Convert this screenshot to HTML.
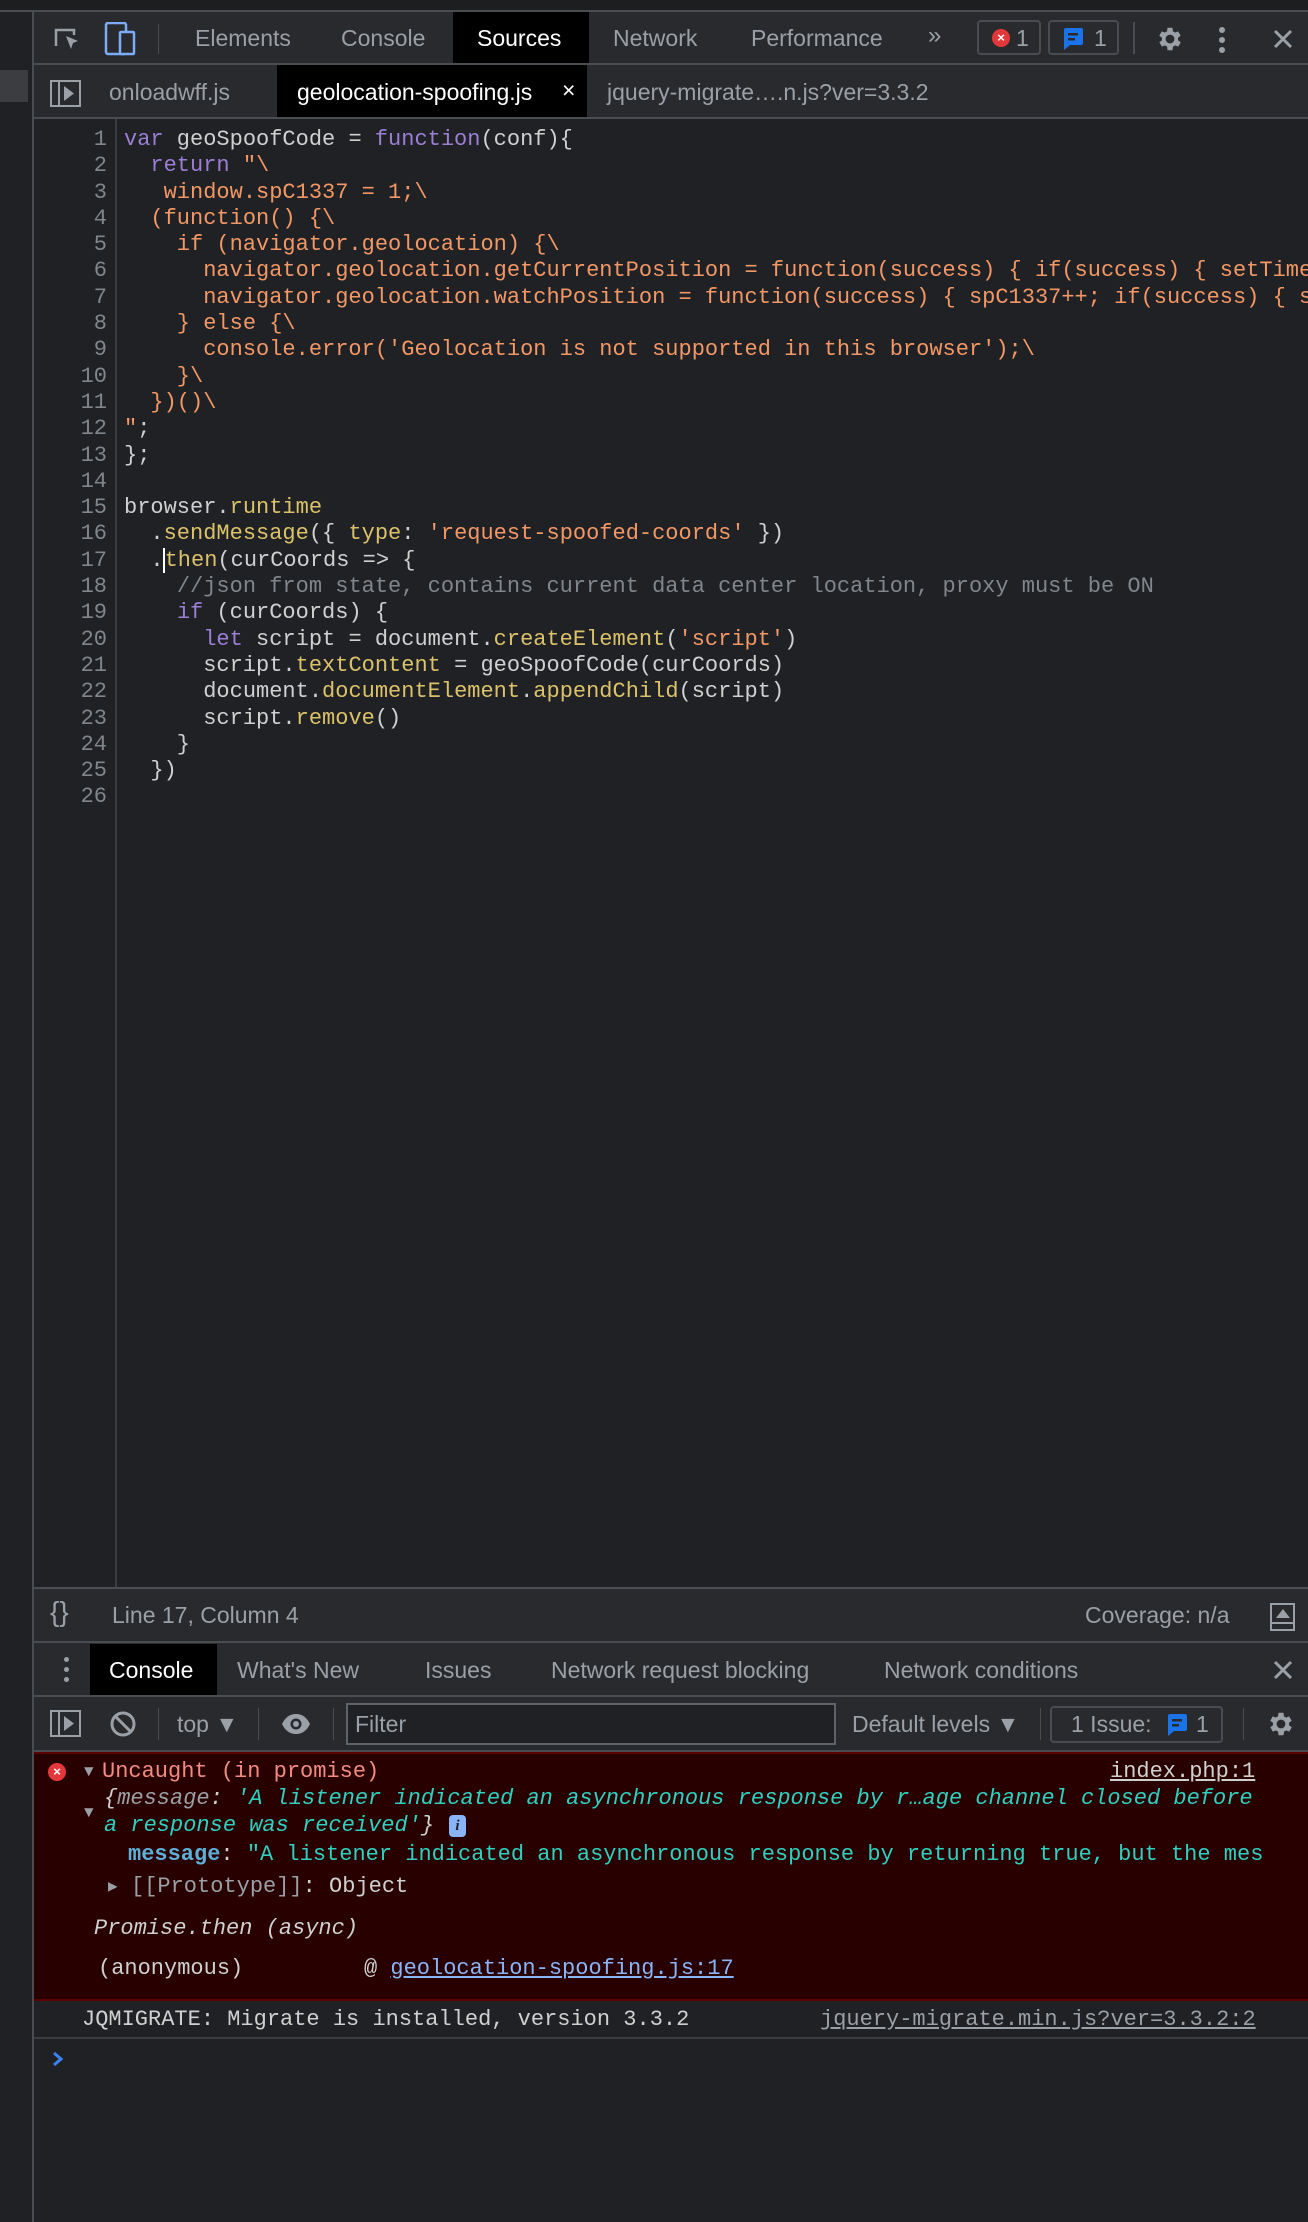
<!DOCTYPE html>
<html><head><meta charset="utf-8"><style>
*{margin:0;padding:0;box-sizing:border-box}
body{width:1308px;height:2222px;background:#202124;position:relative;overflow:hidden;font-family:"Liberation Sans",sans-serif;color:#9aa0a6}
.a{position:absolute;white-space:pre}
.ui{font-size:23px;line-height:26px}
.m{font-family:"Liberation Mono",monospace;font-size:22px;line-height:26px}
.bar{position:absolute;left:34px;right:0;background:#292a2d;border-bottom:2px solid #494c50}
.k{color:#9a7fd5}.s{color:#f29766}.p{color:#cfd0d0}.y{color:#dbc26a}.c{color:#80868b}
</style></head><body>
<div class="a" style="left:0;top:0;width:1308px;height:10px;background:#1d1e20"></div>
<div class="a" style="left:0;top:10px;width:1308px;height:2px;background:#494c50"></div>
<div class="a" style="left:0;top:12px;width:32px;height:2210px;background:#202124"></div>
<div class="a" style="left:0;top:70px;width:28px;height:32px;background:#3c3d40"></div>
<div class="a" style="left:32px;top:12px;width:2px;height:2210px;background:#494c50"></div>

<div class="bar" style="top:12px;height:53px"></div>
<svg class="a" style="left:52px;top:24px" width="32" height="32" viewBox="0 0 32 32"><path d="M4 22V6h18v5" fill="none" stroke="#9aa0a6" stroke-width="2.5"/><path d="M14 12l12 5-5 2-2 6z" fill="#9aa0a6"/></svg>
<svg class="a" style="left:104px;top:22px" width="32" height="34" viewBox="0 0 32 34"><rect x="2" y="1" width="20" height="31" rx="2" fill="none" stroke="#7cacf8" stroke-width="2.5"/><rect x="16" y="10" width="14" height="22" rx="1" fill="#292a2d" stroke="#7cacf8" stroke-width="2.5"/></svg>
<div class="a" style="left:158px;top:24px;width:1px;height:30px;background:#494c50"></div>
<div class="a ui" style="left:195px;top:25px">Elements</div>
<div class="a ui" style="left:341px;top:25px">Console</div>
<div class="a" style="left:453px;top:12px;width:136px;height:51px;background:#000"></div>
<div class="a ui" style="left:477px;top:25px;color:#fff">Sources</div>
<div class="a ui" style="left:613px;top:25px">Network</div>
<div class="a ui" style="left:751px;top:25px">Performance</div>
<div class="a ui" style="left:928px;top:23px;font-size:24px">»</div>
<div class="a" style="left:977px;top:20px;width:64px;height:35px;border:2px solid #494c50;border-radius:4px"></div>
<div class="a" style="left:992px;top:29px;width:18px;height:18px;border-radius:9px;background:#e3383b;color:#fff;font-size:13px;line-height:18px;text-align:center;font-weight:bold">×</div>
<div class="a ui" style="left:1016px;top:25px">1</div>
<div class="a" style="left:1048px;top:20px;width:71px;height:35px;border:2px solid #494c50;border-radius:4px"></div>
<svg class="a" style="left:1062px;top:27px" width="22" height="24" viewBox="0 0 22 24"><path d="M3 1h16a2 2 0 0 1 2 2v13a2 2 0 0 1-2 2H8l-6 5V3a2 2 0 0 1 2-2z" fill="#1a73e8"/><rect x="6" y="6" width="10" height="2.5" fill="#292a2d"/><rect x="6" y="11" width="7" height="2.5" fill="#292a2d"/></svg>
<div class="a ui" style="left:1094px;top:25px">1</div>
<div class="a" style="left:1133px;top:22px;width:2px;height:32px;background:#494c50"></div>
<svg class="a" style="left:1155px;top:24px" width="30" height="30" viewBox="0 0 24 24"><path fill="#9aa0a6" d="M19.4 13a7.5 7.5 0 0 0 0-2l2.1-1.6-2-3.5-2.5 1a7 7 0 0 0-1.7-1L15 3h-4l-.4 2.9a7 7 0 0 0-1.7 1l-2.5-1-2 3.5L6.6 11a7.5 7.5 0 0 0 0 2l-2.1 1.6 2 3.5 2.5-1a7 7 0 0 0 1.7 1L11 21h4l.4-2.9a7 7 0 0 0 1.7-1l2.5 1 2-3.5zM13 15.5A3.5 3.5 0 1 1 13 8.5a3.5 3.5 0 0 1 0 7z" transform="translate(-1 0)"/></svg>
<div class="a" style="left:1219px;top:27px;width:6px;height:6px;border-radius:3px;background:#9aa0a6;box-shadow:0 10px 0 #9aa0a6,0 20px 0 #9aa0a6"></div>
<svg class="a" style="left:1272px;top:28px" width="22" height="22" viewBox="0 0 22 22"><path d="M3 3l16 16M19 3L3 19" stroke="#9aa0a6" stroke-width="3"/></svg>

<div class="bar" style="top:65px;height:54px"></div>
<svg class="a" style="left:50px;top:80px" width="31" height="27" viewBox="0 0 31 27"><rect x="1" y="1" width="29" height="25" fill="none" stroke="#9aa0a6" stroke-width="2"/><path d="M9 1v25" stroke="#9aa0a6" stroke-width="2"/><path d="M14 6l10 7.5-10 7.5z" fill="#9aa0a6"/></svg>
<div class="a ui" style="left:109px;top:79px">onloadwff.js</div>
<div class="a" style="left:277px;top:65px;width:310px;height:52px;background:#000"></div>
<div class="a ui" style="left:297px;top:79px;color:#fff">geolocation-spoofing.js</div>
<div class="a ui" style="left:562px;top:77px;color:#fff">×</div>
<div class="a ui" style="left:607px;top:79px">jquery-migrate….n.js?ver=3.3.2</div>

<div class="a" style="left:34px;top:119px;width:1274px;height:1470px;background:#202124;overflow:hidden">
<div class="a" style="left:81px;top:0;width:2px;height:1470px;background:#3c3d40"></div>
<div class="a m" style="left:0;top:8px;width:73px;text-align:right;color:#80868b;line-height:26.3px">1
2
3
4
5
6
7
8
9
10
11
12
13
14
15
16
17
18
19
20
21
22
23
24
25
26</div>
<div class="a m" style="left:90px;top:8px;line-height:26.3px;color:#cfd0d0"><span class="k">var</span> geoSpoofCode = <span class="k">function</span>(conf){
  <span class="k">return</span> <span class="s">"\</span>
<span class="s">   window.spC1337 = 1;\</span>
<span class="s">  (function() {\</span>
<span class="s">    if (navigator.geolocation) {\</span>
<span class="s">      navigator.geolocation.getCurrentPosition = function(success) { if(success) { setTimeout</span>
<span class="s">      navigator.geolocation.watchPosition = function(success) { spC1337++; if(success) { setT</span>
<span class="s">    } else {\</span>
<span class="s">      console.error('Geolocation is not supported in this browser');\</span>
<span class="s">    }\</span>
<span class="s">  })()\</span>
<span class="s">"</span>;
};

browser.<span class="y">runtime</span>
  .<span class="y">sendMessage</span>({ <span class="y">type</span>: <span class="s">'request-spoofed-coords'</span> })
  .<span style="border-left:2px solid #fff;margin-left:-1px"></span><span class="y">then</span>(curCoords =&gt; {
    <span class="c">//json from state, contains current data center location, proxy must be ON</span>
    <span class="k">if</span> (curCoords) {
      <span class="k">let</span> script = document.<span class="y">createElement</span>(<span class="s">'script'</span>)
      script.<span class="y">textContent</span> = geoSpoofCode(curCoords)
      document.<span class="y">documentElement</span>.<span class="y">appendChild</span>(script)
      script.<span class="y">remove</span>()
    }
  })
</div>
</div>

<div class="bar" style="top:1587px;height:56px;border-top:2px solid #494c50"></div>
<div class="a ui" style="left:50px;top:1599px;font-size:28px">{}</div>
<div class="a ui" style="left:112px;top:1602px">Line 17, Column 4</div>
<div class="a ui" style="left:1085px;top:1602px">Coverage: n/a</div>
<div class="a" style="left:1270px;top:1603px;width:25px;height:28px;border:2px solid #9aa0a6"></div>
<div class="a" style="left:1270px;top:1622px;width:25px;height:2px;background:#9aa0a6"></div>
<div class="a" style="left:1276px;top:1609px;width:0;height:0;border-left:7px solid transparent;border-right:7px solid transparent;border-bottom:9px solid #9aa0a6"></div>

<div class="bar" style="top:1643px;height:54px"></div>
<div class="a" style="left:64px;top:1657px;width:5px;height:5px;border-radius:3px;background:#9aa0a6;box-shadow:0 10px 0 #9aa0a6,0 20px 0 #9aa0a6"></div>
<div class="a" style="left:90px;top:1644px;width:127px;height:51px;background:#000"></div>
<div class="a ui" style="left:109px;top:1657px;color:#fff">Console</div>
<div class="a ui" style="left:237px;top:1657px">What's New</div>
<div class="a ui" style="left:425px;top:1657px">Issues</div>
<div class="a ui" style="left:551px;top:1657px">Network request blocking</div>
<div class="a ui" style="left:884px;top:1657px">Network conditions</div>
<svg class="a" style="left:1272px;top:1659px" width="22" height="22" viewBox="0 0 22 22"><path d="M3 3l16 16M19 3L3 19" stroke="#9aa0a6" stroke-width="3"/></svg>

<div class="bar" style="top:1697px;height:55px"></div>
<svg class="a" style="left:50px;top:1710px" width="31" height="27" viewBox="0 0 31 27"><rect x="1" y="1" width="29" height="25" fill="none" stroke="#9aa0a6" stroke-width="2"/><path d="M9 1v25" stroke="#9aa0a6" stroke-width="2"/><path d="M14 6l10 7.5-10 7.5z" fill="#9aa0a6"/></svg>
<svg class="a" style="left:109px;top:1710px" width="28" height="28" viewBox="0 0 28 28"><circle cx="14" cy="14" r="11" fill="none" stroke="#9aa0a6" stroke-width="3"/><path d="M7 7l14 14" stroke="#9aa0a6" stroke-width="3"/></svg>
<div class="a" style="left:158px;top:1708px;width:1px;height:32px;background:#494c50"></div>
<div class="a ui" style="left:177px;top:1711px">top ▼</div>
<div class="a" style="left:258px;top:1708px;width:1px;height:32px;background:#494c50"></div>
<svg class="a" style="left:281px;top:1712px" width="30" height="24" viewBox="0 0 30 24"><path d="M1 12C5 4 10 2 15 2s10 2 14 10c-4 8-9 10-14 10S5 20 1 12z" fill="#9aa0a6"/><circle cx="15" cy="12" r="5.5" fill="#292a2d"/><circle cx="15" cy="12" r="3" fill="#9aa0a6"/></svg>
<div class="a" style="left:333px;top:1708px;width:1px;height:32px;background:#494c50"></div>
<div class="a" style="left:346px;top:1703px;width:490px;height:42px;border:2px solid #5f6368;background:#202124"></div>
<div class="a ui" style="left:355px;top:1711px">Filter</div>
<div class="a ui" style="left:852px;top:1711px">Default levels ▼</div>
<div class="a" style="left:1040px;top:1708px;width:1px;height:32px;background:#494c50"></div>
<div class="a" style="left:1050px;top:1706px;width:173px;height:37px;border:2px solid #494c50;border-radius:4px"></div>
<div class="a ui" style="left:1071px;top:1711px">1 Issue:</div>
<svg class="a" style="left:1166px;top:1713px" width="22" height="24" viewBox="0 0 22 24"><path d="M3 1h16a2 2 0 0 1 2 2v13a2 2 0 0 1-2 2H8l-6 5V3a2 2 0 0 1 2-2z" fill="#1a73e8"/><rect x="6" y="6" width="10" height="2.5" fill="#292a2d"/><rect x="6" y="11" width="7" height="2.5" fill="#292a2d"/></svg>
<div class="a ui" style="left:1196px;top:1711px">1</div>
<div class="a" style="left:1243px;top:1708px;width:1px;height:32px;background:#494c50"></div>
<svg class="a" style="left:1266px;top:1709px" width="30" height="30" viewBox="0 0 24 24"><path fill="#9aa0a6" d="M19.4 13a7.5 7.5 0 0 0 0-2l2.1-1.6-2-3.5-2.5 1a7 7 0 0 0-1.7-1L15 3h-4l-.4 2.9a7 7 0 0 0-1.7 1l-2.5-1-2 3.5L6.6 11a7.5 7.5 0 0 0 0 2l-2.1 1.6 2 3.5 2.5-1a7 7 0 0 0 1.7 1L11 21h4l.4-2.9a7 7 0 0 0 1.7-1l2.5 1 2-3.5zM13 15.5A3.5 3.5 0 1 1 13 8.5a3.5 3.5 0 0 1 0 7z" transform="translate(-1 0)"/></svg>

<div class="a" style="left:34px;top:1752px;width:1274px;height:249px;background:#290000;border-top:2px solid #5c0000;border-bottom:2px solid #5c0000"></div>
<div class="a" style="left:48px;top:1763px;width:18px;height:18px;border-radius:9px;background:#e3383b;color:#fff;font-size:13px;line-height:18px;text-align:center;font-weight:bold">×</div>
<div class="a m" style="left:84px;top:1759px;color:#9aa0a6;font-size:16px">▼</div>
<div class="a m" style="left:102px;top:1759px;color:#f28b82">Uncaught (in promise)</div>
<div class="a m" style="left:1110px;top:1759px;color:#cfd0d0;text-decoration:underline">index.php:1</div>
<div class="a m" style="left:104px;top:1786px;color:#2fd0c0;font-style:italic"><span style="color:#cfd0d0">{</span><span style="color:#9aa0a6">message</span><span style="color:#cfd0d0">:</span> 'A listener indicated an asynchronous response by r…age channel closed before</div>
<div class="a m" style="left:84px;top:1800px;color:#9aa0a6;font-size:16px">▼</div>
<div class="a m" style="left:104px;top:1813px;color:#2fd0c0;font-style:italic">a response was received'<span style="color:#cfd0d0">}</span></div>
<div class="a" style="left:449px;top:1815px;width:17px;height:22px;border-radius:4px;background:#8ab4f8;color:#202124;font:italic bold 15px/22px 'Liberation Serif',serif;text-align:center">i</div>
<div class="a m" style="left:128px;top:1842px;color:#2fd0c0;width:1140px;overflow:hidden"><span style="color:#5db0d7;font-weight:bold">message</span><span style="color:#cfd0d0">:</span> "A listener indicated an asynchronous response by returning true, but the mes</div>
<div class="a m" style="left:108px;top:1874px;color:#9aa0a6;font-size:16px">▶</div>
<div class="a m" style="left:131px;top:1874px;color:#9aa0a6">[[Prototype]]<span style="color:#cfd0d0">: Object</span></div>
<div class="a m" style="left:94px;top:1916px;color:#cfd0d0;font-style:italic">Promise.then (async)</div>
<div class="a m" style="left:98px;top:1956px;color:#cfd0d0">(anonymous)</div>
<div class="a m" style="left:364px;top:1956px;color:#cfd0d0">@ <span style="color:#8ab4f8;text-decoration:underline">geolocation-spoofing.js:17</span></div>

<div class="a m" style="left:82px;top:2007px;color:#cfd0d0">JQMIGRATE: Migrate is installed, version 3.3.2</div>
<div class="a m" style="left:820px;top:2007px;color:#9aa0a6;text-decoration:underline">jquery-migrate.min.js?ver=3.3.2:2</div>
<div class="a" style="left:34px;top:2037px;width:1274px;height:2px;background:#3c3d40"></div>
<svg class="a" style="left:52px;top:2051px" width="12" height="16" viewBox="0 0 12 16"><path d="M2 2l7 6-7 6" fill="none" stroke="#3b82f6" stroke-width="3"/></svg>
</body></html>
